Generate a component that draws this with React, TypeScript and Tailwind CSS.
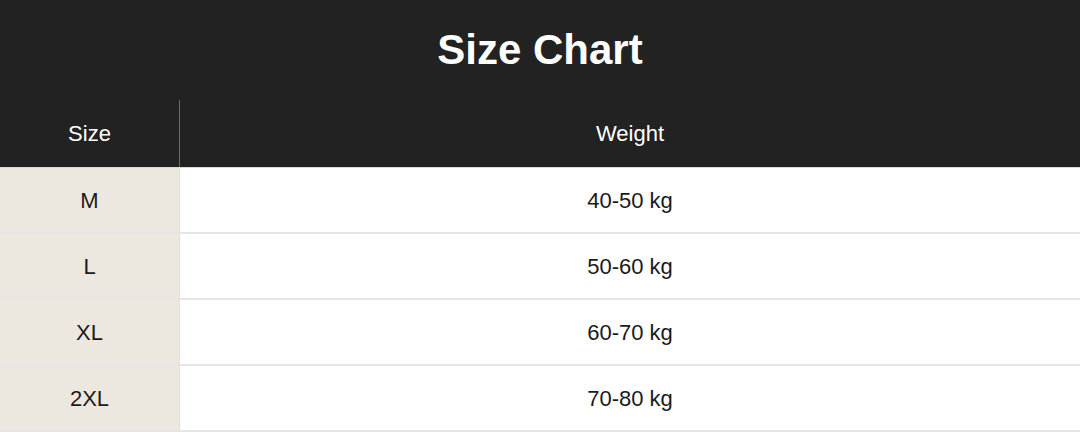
const rows = [
  { size: "M", weight: "40-50 kg" },
  { size: "L", weight: "50-60 kg" },
  { size: "XL", weight: "60-70 kg" },
  { size: "2XL", weight: "70-80 kg" },
];

export default function App() {
  return (
    <div className="w-[1080px] h-[432px] overflow-hidden bg-white font-['Liberation_Sans',Arial,sans-serif]">
      <div className="bg-[#222222] text-white">
        <div className="h-[100px] flex items-center justify-center">
          <h1 className="text-[42px] font-bold leading-none">Size Chart</h1>
        </div>
        <div className="h-[67px] flex text-[22px]">
          <div className="w-[180px] flex items-center justify-center border-r border-[#6b6b6b]">Size</div>
          <div className="flex-1 flex items-center justify-center">Weight</div>
        </div>
      </div>
      <div className="border-t border-[#d9d9d9]">
        {rows.map((r) => (
          <div key={r.size} className="h-[66px] flex border-b-2 border-[#e6e6e6] text-[22px] text-[#1a1a1a]">
            <div className="w-[180px] bg-[#ece8df] flex items-center justify-center border-r border-[#e2ded6]">{r.size}</div>
            <div className="flex-1 flex items-center justify-center">{r.weight}</div>
          </div>
        ))}
      </div>
    </div>
  );
}
